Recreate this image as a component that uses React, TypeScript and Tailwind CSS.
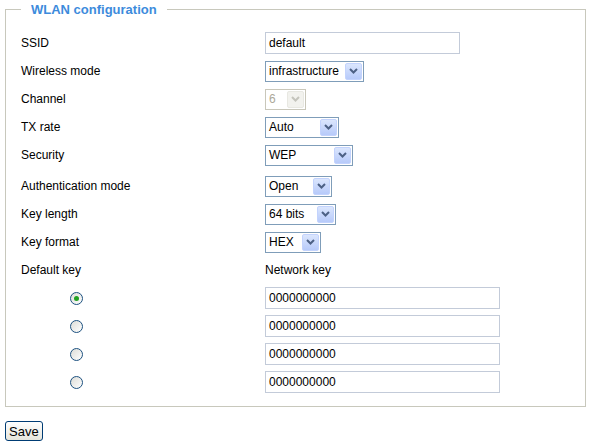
import React from 'react';

const Chevron = ({ disabled }: { disabled?: boolean }) => (
  <svg width="9" height="6" viewBox="0 0 9 6">
    <path d="M1 1 L4.5 4.5 L8 1" fill="none" stroke={disabled ? '#c4c4bc' : '#4d6185'} strokeWidth="2" />
  </svg>
);

interface SelProps {
  value: string;
  width: string;
  disabled?: boolean;
}

const Sel: React.FC<SelProps> = ({ value, width, disabled }) => (
  <div
    className={`${width} h-[21px] flex items-center border ${
      disabled ? 'border-[#c9c7ba] text-[#aca899]' : 'border-[#7f9db9] text-black'
    } bg-white`}
  >
    <span className="flex-1 pl-[3px] leading-none">{value}</span>
    <span
      className={`w-[17px] h-[17px] mr-[1px] flex items-center justify-center rounded-[2px] border ${
        disabled
          ? 'border-[#e8e8e2] bg-[#f2f2ee]'
          : 'border-[#c3d3fd] bg-gradient-to-b from-[#dbe6fd] to-[#b7cafa]'
      }`}
    >
      <Chevron disabled={disabled} />
    </span>
  </div>
);

const TextBox = ({ value, width }: { value: string; width: string }) => (
  <div className={`${width} h-[22px] flex items-center border border-[#c3cbd9] bg-white pl-[3px] text-black`}>
    {value}
  </div>
);

const Radio = ({ checked }: { checked?: boolean }) => (
  <span className="w-[13px] h-[13px] rounded-full border border-[#1c5180] bg-gradient-to-br from-[#dcdcd7] to-white flex items-center justify-center">
    {checked && <span className="w-[5px] h-[5px] rounded-full bg-[#21a121]" />}
  </span>
);

const Row = ({ label, children, extra }: { label: string; children: React.ReactNode; extra?: string }) => (
  <div className={`flex items-center h-[28px] ${extra ?? ''}`}>
    <div className="w-[244px] shrink-0">{label}</div>
    {children}
  </div>
);

export default function App() {
  return (
    <div className="w-[590px] h-[445px] bg-white font-['Liberation_Sans',Arial,sans-serif] text-[12px] text-black pt-[2px]">
      <fieldset className="ml-[5px] w-[581px] border border-[#c8c8bc] pl-[15px] pb-[10px]">
        <legend className="px-[10px] text-[13px] leading-[15px] font-bold text-[#3d8bdc]">WLAN configuration</legend>
        <div className="mt-[12px]">
          <Row label="SSID">
            <TextBox value="default" width="w-[195px]" />
          </Row>
          <Row label="Wireless mode">
            <Sel value="infrastructure" width="w-[99px]" />
          </Row>
          <Row label="Channel">
            <Sel value="6" width="w-[41px]" disabled />
          </Row>
          <Row label="TX rate">
            <Sel value="Auto" width="w-[74px]" />
          </Row>
          <Row label="Security">
            <Sel value="WEP" width="w-[88px]" />
          </Row>
          <Row label="Authentication mode" extra="mt-[3px]">
            <Sel value="Open" width="w-[67px]" />
          </Row>
          <Row label="Key length">
            <Sel value="64 bits" width="w-[71px]" />
          </Row>
          <Row label="Key format">
            <Sel value="HEX" width="w-[56px]" />
          </Row>
          <Row label="Default key">
            <span>Network key</span>
          </Row>
          {[true, false, false, false].map((checked, i) => (
            <div key={i} className="flex items-center h-[28px]">
              <div className="w-[244px] shrink-0 pl-[49px] flex items-center">
                <Radio checked={checked} />
              </div>
              <TextBox value="0000000000" width="w-[235px]" />
            </div>
          ))}
        </div>
      </fieldset>
      <button className="ml-[5px] mt-[14px] h-[20px] px-[3px] rounded-[3px] border border-[#003c74] bg-gradient-to-b from-white to-[#e6e5dc] text-[13px] leading-none text-black">
        Save
      </button>
    </div>
  );
}
